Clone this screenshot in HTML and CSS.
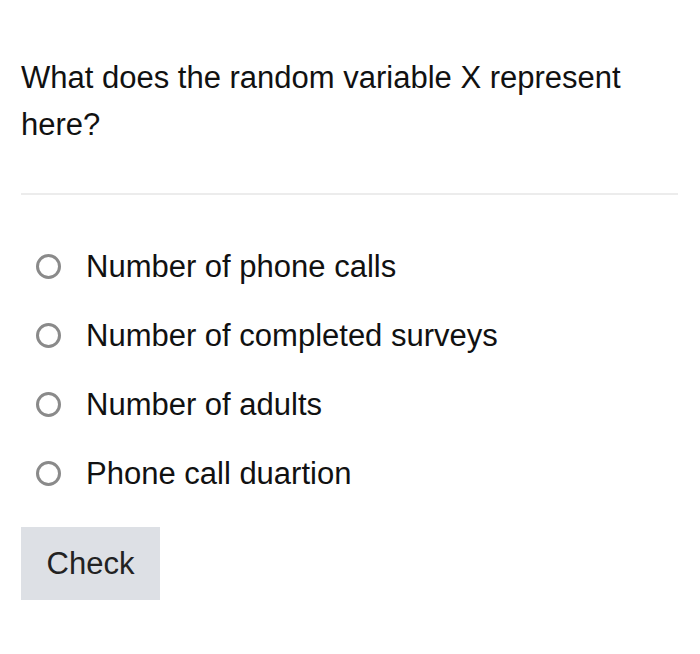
FILE: index.html
```html
<!DOCTYPE html>
<html>
<head>
<meta charset="utf-8">
<link rel="stylesheet" href="styles.css">
</head>
<body>
<div class="quiz">
  <p class="question">What does the random variable X represent here?</p>
  <hr class="divider">
  <ul class="options">
    <li class="option"><span class="radio"></span><span class="label">Number of phone calls</span></li>
    <li class="option"><span class="radio"></span><span class="label">Number of completed surveys</span></li>
    <li class="option"><span class="radio"></span><span class="label">Number of adults</span></li>
    <li class="option"><span class="radio"></span><span class="label">Phone call duartion</span></li>
  </ul>
  <button class="check">Check</button>
</div>
</body>
</html>
```

FILE: styles.css
```css
html, body {
  margin: 0;
  padding: 0;
  background: #ffffff;
}
body {
  font-family: "Liberation Sans", Arial, sans-serif;
  color: #111111;
}
.quiz {
  padding: 54px 22px 0 21px;
}
.question {
  margin: 0;
  font-size: 31px;
  line-height: 47px;
  max-width: 640px;
}
.divider {
  margin: 45px 0 0 0;
  border: 0;
  height: 2px;
  background: #ececec;
}
.options {
  list-style: none;
  margin: 37px 0 0 0;
  padding: 0;
}
.option {
  display: flex;
  align-items: center;
  height: 69px;
  font-size: 31px;
}
.radio {
  box-sizing: border-box;
  width: 25px;
  height: 25px;
  border: 3px solid #8a8a8a;
  border-radius: 50%;
  margin-left: 15px;
  margin-right: 25px;
  flex: none;
}
.check {
  margin-top: 19px;
  width: 139px;
  height: 73px;
  border: 0;
  border-radius: 0;
  background: #dde0e5;
  font-family: "Liberation Sans", Arial, sans-serif;
  font-size: 31px;
  color: #222222;
  padding: 0;
}
```
